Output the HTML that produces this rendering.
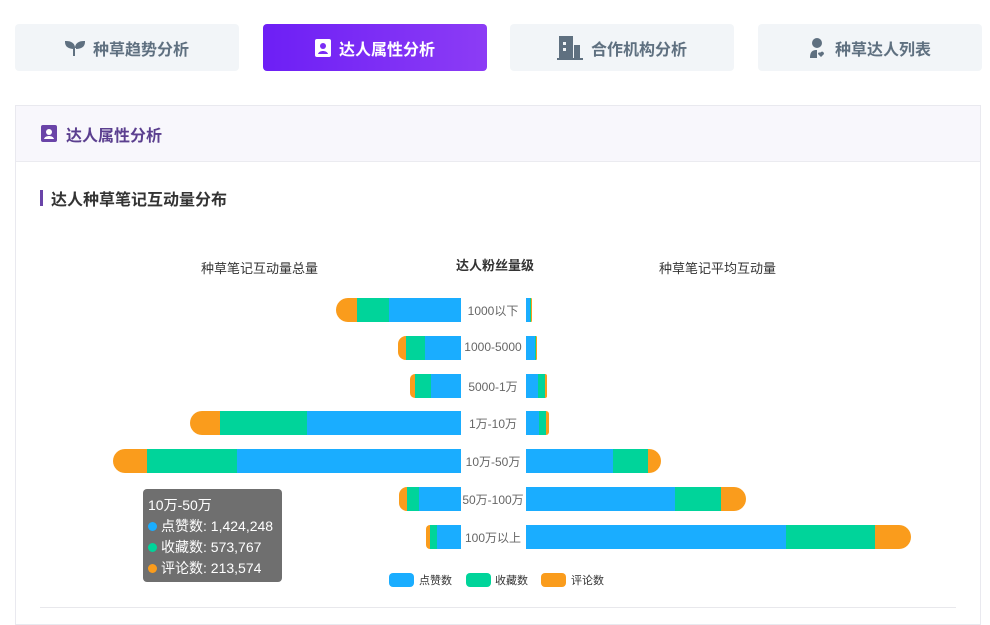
<!DOCTYPE html>
<html><head><meta charset="utf-8"><style>
*{margin:0;padding:0;box-sizing:border-box}
body{width:990px;height:618px;background:#fff;font-family:"Liberation Sans","Noto Sans CJK SC",sans-serif;position:relative;overflow:hidden}
.tab{position:absolute;top:24px;height:47px;width:224px;background:#f2f5f8;border-radius:4px;display:flex;align-items:center;justify-content:center;font-size:16px;font-weight:bold;color:#5f7080;gap:8px}
.tab.on{background:linear-gradient(90deg,#6d1ff5,#8c3cf5);color:#fff}
.card{position:absolute;left:15px;top:105px;width:966px;height:520px;border:1px solid #e9e9ef}
.hd{height:56px;background:#f8f7fc;border-bottom:1px solid #ebebf0;display:flex;align-items:center;padding-left:25px;gap:9px;font-size:16px;font-weight:bold;color:#5b3f8f}
.t{position:absolute;font-size:13px;color:#333}
.row{position:absolute;height:24px;display:flex;overflow:hidden}
.row div{height:24px;flex:none}
.lab{position:absolute;font-size:12px;color:#666;width:66px;text-align:center;left:460px}
.tip{position:absolute;left:143px;top:489px;width:139px;height:93px;background:#6f6f6f;border-radius:4px;color:#fff;font-size:14px;padding:6px 5px;line-height:21px}
.d{display:inline-block;width:9px;height:9px;border-radius:50%;margin-right:4px}
.lg{position:absolute;top:573px;width:25px;height:14px;border-radius:4px}
.lt{position:absolute;top:572px;font-size:11px;color:#333}
</style></head><body>
<div class="tab" style="left:15px"><svg width="20" height="18" viewBox="0 0 20 18"><path d="M9 17V9C9 5 6 3 1 3c0 4 3 6 8 6M11 9c5 0 8-2 8-6-5 0-8 2-8 6" fill="#5f7080" stroke="#5f7080" stroke-width="2"/></svg>种草趋势分析</div>
<div class="tab on" style="left:263px"><svg width="16" height="18" viewBox="0 0 16 18"><rect x="0" y="0" width="16" height="18" rx="2" fill="#fff"/><circle cx="8" cy="7" r="3" fill="#7a2cf5"/><path d="M3 15c1-4 9-4 10 0z" fill="#7a2cf5"/></svg>达人属性分析</div>
<div class="tab" style="left:510px"><svg width="26" height="24" viewBox="0 0 26 24"><rect x="2" y="0" width="14" height="23" fill="#5f7080"/><rect x="17" y="9" width="6" height="14" fill="#5f7080"/><rect x="0" y="22" width="26" height="2" fill="#5f7080"/><rect x="6" y="6" width="3" height="3" fill="#f2f5f8"/><rect x="6" y="12" width="3" height="3" fill="#f2f5f8"/></svg>合作机构分析</div>
<div class="tab" style="left:758px"><svg width="18" height="20" viewBox="0 0 18 20"><circle cx="8" cy="5" r="5" fill="#5f7080"/><path d="M1 20c0-7 3-8 7-8v8z" fill="#5f7080"/><path d="M11 15c1-2 4-2 4 1l-3 3-3-3c0-2 2-2 2-1z" fill="#5f7080"/></svg>种草达人列表</div>
<div class="card">
<div class="hd"><svg width="16" height="17" viewBox="0 0 16 17"><rect width="16" height="17" rx="2" fill="#6a44a8"/><circle cx="8" cy="7" r="3" fill="#fff"/><path d="M3 14c1-4 9-4 10 0z" fill="#fff"/></svg>达人属性分析</div>
</div>
<div style="position:absolute;left:40px;top:190px;width:3px;height:16px;background:#6a44a8"></div>
<div style="position:absolute;left:51px;top:186px;font-size:16px;font-weight:bold;color:#333">达人种草笔记互动量分布</div>
<div class="t" style="left:201px;top:258px">种草笔记互动量总量</div>
<div class="t" style="left:456px;top:255px;font-weight:bold">达人粉丝量级</div>
<div class="t" style="left:659px;top:258px">种草笔记平均互动量</div>
<div id="c"></div>
<div class="tip"><div>10万-50万</div><div><span class="d" style="background:#1aadff"></span>点赞数: 1,424,248</div><div><span class="d" style="background:#00d49a"></span>收藏数: 573,767</div><div><span class="d" style="background:#fa9c1c"></span>评论数: 213,574</div></div>
<div class="lg" style="left:389px;background:#1aadff"></div><div class="lt" style="left:419px">点赞数</div>
<div class="lg" style="left:466px;background:#00d49a"></div><div class="lt" style="left:495px">收藏数</div>
<div class="lg" style="left:541px;background:#fa9c1c"></div><div class="lt" style="left:571px">评论数</div>
<div style="position:absolute;left:40px;top:607px;width:916px;height:1px;background:#e8e8ec"></div>
<script>
var L=[[336,357,389],[398,406,425],[410,415,431],[190,220,307],[113,147,237],[399,407,419],[426,430,437]];
var R=[[530,531,532],[535,536,537],[538,545,547],[539,546,549],[613,648,661],[675,721,746],[786,875,911]];
var labs=["1000以下","1000-5000","5000-1万","1万-10万","10万-50万","50万-100万","100万以上"];
var B="#1aadff",G="#00d49a",O="#fa9c1c",h="";
for(var i=0;i<7;i++){var y=Math.round(298+i*37.8),l=L[i],r=R[i];
var ro=Math.min(12,l[1]-l[0]);
h+='<div class="row" style="top:'+y+'px;left:'+l[0]+'px;width:'+(461-l[0])+'px;border-radius:'+ro+'px 0 0 '+ro+'px"><div style="width:'+(l[1]-l[0])+'px;background:'+O+'"></div><div style="width:'+(l[2]-l[1])+'px;background:'+G+'"></div><div style="width:'+(461-l[2])+'px;background:'+B+'"></div></div>';
var rr=Math.min(12,r[2]-r[1]);
h+='<div class="row" style="top:'+y+'px;left:526px;width:'+(r[2]-526)+'px;border-radius:0 '+rr+'px '+rr+'px 0"><div style="width:'+(r[0]-526)+'px;background:'+B+'"></div><div style="width:'+(r[1]-r[0])+'px;background:'+G+'"></div><div style="width:'+(r[2]-r[1])+'px;background:'+O+'"></div></div>';
h+='<div class="lab" style="top:'+(y+4)+'px">'+labs[i]+'</div>';}
document.getElementById('c').innerHTML=h;
</script>
</body></html>
